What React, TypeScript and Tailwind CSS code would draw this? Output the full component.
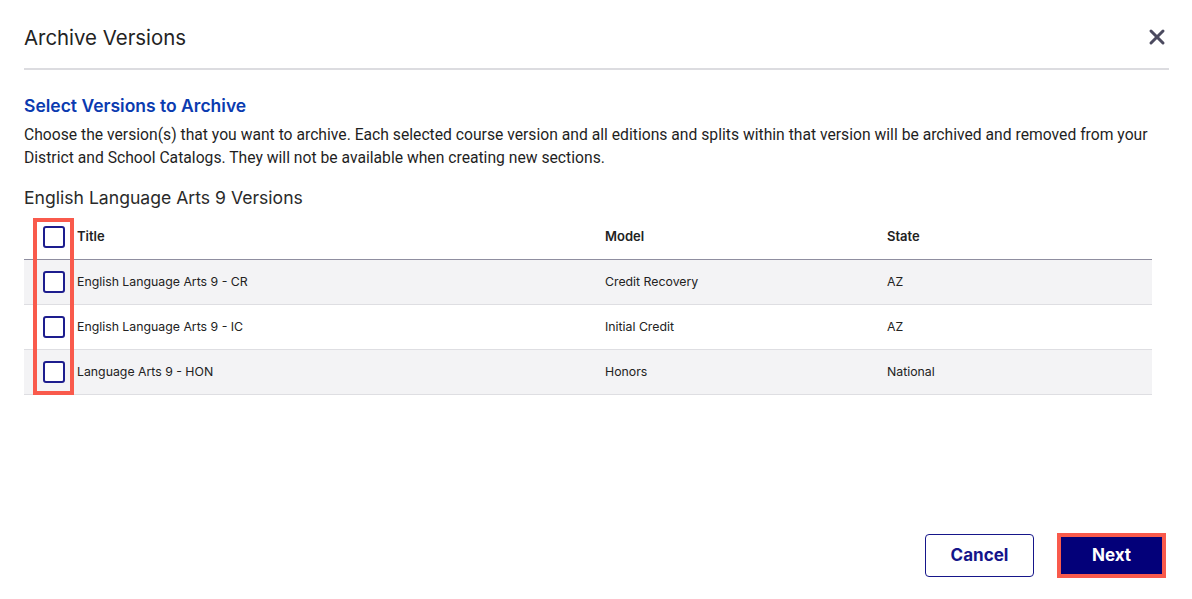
import { X } from "lucide-react";

interface Version {
  title: string;
  model: string;
  state: string;
}

const versions: Version[] = [
  { title: "English Language Arts 9 - CR", model: "Credit Recovery", state: "AZ" },
  { title: "English Language Arts 9 - IC", model: "Initial Credit", state: "AZ" },
  { title: "Language Arts 9 - HON", model: "Honors", state: "National" },
];

function Checkbox() {
  return <span className="block w-[22px] h-[22px] border-2 border-[#1d1d8e] rounded-[3px] bg-white" />;
}

export default function App() {
  return (
    <div className="w-[1192px] h-[599px] bg-white flex flex-col font-['Inter',sans-serif] text-[#222]">
      {/* Header */}
      <div className="ml-6 mr-[23px] h-[70px] flex items-center justify-between border-b-2 border-[#dcdce0]">
        <h1 className="mt-[7px] text-[20.4px] leading-[28px] text-[#232323]">Archive Versions</h1>
        <X size={24} strokeWidth={3} className="text-[#4b4a5f] mt-[5px] mr-0" />
      </div>

      <div className="ml-6 mr-[30px]">
        <h2 className="mt-[24px] text-[17.5px] leading-6 font-semibold text-[#0b3bb0]">Select Versions to Archive</h2>
        <p className="mt-[5px] font-['Roboto',sans-serif] text-[15.7px] leading-[23px] text-[#1f1f1f]">
          Choose the version(s) that you want to archive. Each selected course version and all editions and splits within that version will be archived and removed from your District and School Catalogs. They will not be available when creating new sections.
        </p>
        <h3 className="mt-[17px] text-[17.6px] leading-6 text-[#2a2a2a]">English Language Arts 9 Versions</h3>

        {/* Versions table */}
        <div className="relative mt-[5px] w-[1128px] text-[12.3px]">
          <div className="grid grid-cols-[53px_528px_282px_1fr] items-center h-[45px] border-b border-[#8f8ea0] text-[13px] font-semibold">
            <div className="pl-[19px]"><Checkbox /></div>
            <div>Title</div>
            <div>Model</div>
            <div>State</div>
          </div>
          {versions.map((v, i) => (
            <div
              key={v.title}
              className={
                "grid grid-cols-[53px_528px_282px_1fr] items-center h-[45px] border-b border-[#dedee2] " +
                (i % 2 === 0 ? "bg-[#f3f3f5]" : "bg-white")
              }
            >
              <div className="pl-[19px]"><Checkbox /></div>
              <div>{v.title}</div>
              <div>{v.model}</div>
              <div>{v.state}</div>
            </div>
          ))}
          <div className="absolute left-[9px] top-[3px] w-[41px] h-[177px] border-4 border-[#f95a4c] pointer-events-none" />
        </div>
      </div>

      {/* Footer */}
      <div className="mt-auto mb-[21px] mr-[26px] flex justify-end items-center gap-[23px]">
        <button className="w-[109px] h-[43px] rounded-[4px] border border-[#16168a] text-[#15158a] text-[17px] font-bold">
          Cancel
        </button>
        <button className="w-[109px] h-[45px] border-4 border-[#f95a4c] bg-[#030079] text-white text-[17px] font-bold">
          Next
        </button>
      </div>
    </div>
  );
}
